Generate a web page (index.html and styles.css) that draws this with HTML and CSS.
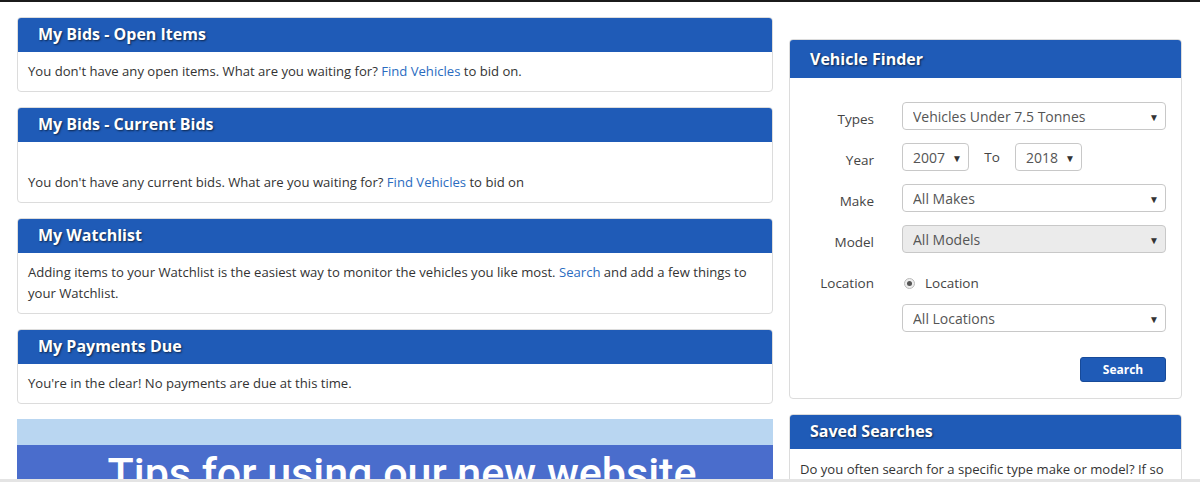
FILE: index.html
```html
<!DOCTYPE html>
<html lang="en">
<head>
  <meta charset="UTF-8" />
  <title>My Account</title>
  <meta name="viewport" content="width=device-width, initial-scale=1.0" />
  <link rel="stylesheet" href="styles.css">
</head>
<body>

<div class="page">
  <div class="main-col">
    <div class="panel">
      <div class="panel-head">My Bids - Open Items</div>
      <div class="panel-body">You don't have any open items. What are you waiting for? <a href="#">Find Vehicles</a> to bid on.</div>
    </div>

    <div class="panel">
      <div class="panel-head">My Bids - Current Bids</div>
      <div class="panel-body spaced">You don't have any current bids. What are you waiting for? <a href="#">Find Vehicles</a> to bid on</div>
    </div>

    <div class="panel">
      <div class="panel-head">My Watchlist</div>
      <div class="panel-body">Adding items to your Watchlist is the easiest way to monitor the vehicles you like most. <a href="#">Search</a> and add a few things to your Watchlist.</div>
    </div>

    <div class="panel">
      <div class="panel-head">My Payments Due</div>
      <div class="panel-body">You're in the clear! No payments are due at this time.</div>
    </div>

    <div class="banner">
      <div class="banner-top"></div>
      <div class="banner-main">Tips for using our new website</div>
    </div>
  </div>

  <div class="side-col">
    <div class="panel">
      <div class="panel-head tall">Vehicle Finder</div>
      <div class="finder-body">
        <div class="form-row">
          <label class="form-label">Types</label>
          <div class="select"><select><option>Vehicles Under 7.5 Tonnes</option></select></div>
        </div>
        <div class="form-row">
          <label class="form-label">Year</label>
          <div class="select small"><select><option>2007</option></select></div>
          <span class="to">To</span>
          <div class="select small"><select><option>2018</option></select></div>
        </div>
        <div class="form-row">
          <label class="form-label">Make</label>
          <div class="select"><select><option>All Makes</option></select></div>
        </div>
        <div class="form-row">
          <label class="form-label">Model</label>
          <div class="select disabled"><select disabled><option>All Models</option></select></div>
        </div>
        <div class="form-row radio-row">
          <label class="form-label">Location</label>
          <span class="radio"></span>
          <span class="radio-text">Location</span>
        </div>
        <div class="form-row">
          <span class="form-label"></span>
          <div class="select"><select><option>All Locations</option></select></div>
        </div>
        <div class="button-row">
          <button class="search-btn">Search</button>
        </div>
      </div>
    </div>

    <div class="panel">
      <div class="panel-head">Saved Searches</div>
      <div class="panel-body side-text">Do you often search for a specific type make or model? If so</div>
    </div>
  </div>
</div>

<div class="bottom-strip"></div>

</body>
</html>
```

FILE: styles.css
```css
html, body { margin: 0; padding: 0; }
body { font-family: "Open Sans", "Liberation Sans", sans-serif; font-size: 13px; color: #333; background: #fff; border-top: 2px solid #1b1b1b; overflow: hidden; height: 480px; }
a { color: #2a6bbf; text-decoration: none; }

.page { display: flex; gap: 16px; padding: 15px 0 0 17px; }
.main-col { width: 756px; }
.side-col { width: 393px; padding-top: 22px; }

.panel { border: 1px solid #dcdcdc; border-radius: 4px; background: #fff; margin-bottom: 15px; overflow: hidden; }
.panel-head { background: #1f5bb7; color: #fff; font-weight: bold; font-size: 16px; height: 34px; line-height: 33px; padding-left: 20px; text-shadow: 1px 1px 2px rgba(0,0,0,0.6); }
.panel-head.tall { height: 38px; line-height: 38px; }
.panel-body { padding: 9px 10px 9px; line-height: 21px; font-size: 13.1px; }
.panel-body.spaced { padding-top: 30px; }
.side-text { padding-top: 10px; }

.banner { margin-top: 14px; }
.banner-top { height: 26px; background: #b9d6f1; }
.banner-main { background: #4a6dcc; color: #fff; font-family: Roboto, "Liberation Sans", sans-serif; font-weight: 500; font-size: 43px; text-align: center; height: 60px; line-height: 56px; padding-left: 14px; }

.finder-body { padding: 24px 15px 16px 0; }
.form-row { display: flex; align-items: center; margin-bottom: 13px; }
.form-label { width: 84px; text-align: right; padding-right: 28px; padding-top: 6px; font-size: 13.5px; color: #444; flex: none; }
.select { position: relative; flex: 1; }
.select select { display: block; appearance: none; -webkit-appearance: none; width: 100%; height: 28px; border: 1px solid #c8c8c8; border-radius: 4px; background: #fff; padding: 0 20px 0 10px; font-family: "Open Sans", "Liberation Sans", sans-serif; font-size: 14px; color: #555; }
.select::after { content: "▼"; position: absolute; right: 7px; top: 8px; font-size: 10px; color: #333; pointer-events: none; }
.select.small { flex: none; width: 67px; }
.select.disabled select { background: #ebebeb; color: #555; opacity: 1; }
.to { width: 46px; text-align: center; font-size: 13.5px; color: #444; }

.radio-row { height: 28px; padding-top: 3px; margin-bottom: 7px; }
.radio-row .form-label { padding-top: 0; }
.radio { width: 9px; height: 9px; border-radius: 50%; border: 1px solid #bbb; background: #eee; position: relative; margin: 0 10px 0 2px; }
.radio::after { content: ""; position: absolute; left: 2px; top: 2px; width: 5px; height: 5px; border-radius: 50%; background: #555; }
.radio-text { font-size: 13.5px; color: #444; }

.button-row { display: flex; justify-content: flex-end; padding-top: 12px; }
.search-btn { width: 86px; height: 25px; background: #1f5bb7; border: 1px solid #174a99; border-radius: 3px; color: #fff; font-family: "Open Sans", "Liberation Sans", sans-serif; font-weight: bold; font-size: 12px; cursor: pointer; }

.bottom-strip { position: fixed; left: 0; right: 0; bottom: 0; height: 3px; background: #e4e4e4; }
```
